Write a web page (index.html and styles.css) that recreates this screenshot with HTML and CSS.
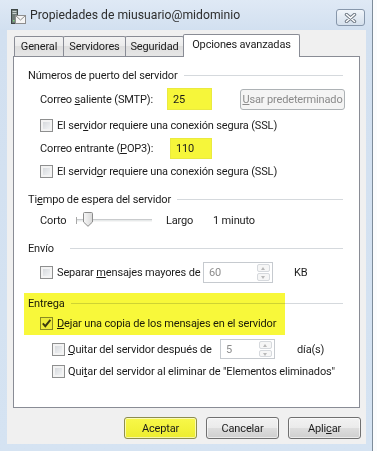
FILE: index.html
```html
<!DOCTYPE html>
<html lang="es">
<head>
<meta charset="utf-8">
<title>Propiedades de miusuario@midominio</title>
<link rel="stylesheet" href="styles.css">
</head>
<body>
<div class="window">
  <div class="titlebar">
    <svg class="app-icon" width="16" height="16" viewBox="0 0 16 16">
      <rect x="1.5" y="0.5" width="6" height="14" fill="#6f7b78" stroke="#3f4745"/>
      <rect x="2.5" y="2" width="4" height="1" fill="#c8d0cf"/>
      <rect x="2.5" y="4" width="4" height="1" fill="#c8d0cf"/>
      <rect x="3" y="11" width="1.5" height="1.5" fill="#7fd37a"/>
      <rect x="5.5" y="6.5" width="10" height="8" fill="#f5f5f5" stroke="#8d8d8d"/>
      <path d="M5.5 6.5 L10.5 11 L15.5 6.5" fill="none" stroke="#8d8d8d"/>
    </svg>
    <span class="title">Propiedades de miusuario@midominio</span>
    <div class="close">
      <svg width="13" height="10" viewBox="0 0 13 10">
        <path d="M2.5 1.5 L10.5 8.5 M10.5 1.5 L2.5 8.5" stroke="#6e7884" stroke-width="3.4" stroke-linecap="round" fill="none"/>
        <path d="M2.5 1.5 L10.5 8.5 M10.5 1.5 L2.5 8.5" stroke="#ffffff" stroke-width="1.5" stroke-linecap="round" fill="none"/>
      </svg>
    </div>
  </div>

  <div class="client">
    <div class="tabs">
      <div class="tab t-general">General</div>
      <div class="tab t-servidores">Servidores</div>
      <div class="tab t-seguridad">Seguridad</div>
      <div class="tab t-opciones active">Opciones avanzadas</div>
    </div>

    <div class="panel">
      <div class="group-head gh-puertos"><span>Números de puerto del servidor</span></div>

      <div class="row r-smtp">
        <span class="lbl lbl-smtp">Correo <u>s</u>aliente (SMTP):</span>
        <span class="field f-smtp">25</span>
        <span class="btn-disabled"><u>U</u>sar predeterminado</span>
      </div>

      <div class="row r-ssl1">
        <span class="cb"></span>
        <span class="cb-text">El ser<u>v</u>idor requiere una conexión segura (SSL)</span>
      </div>

      <div class="row r-pop3">
        <span class="lbl lbl-pop3">Correo entrante (<u>P</u>OP3):</span>
        <span class="field f-pop3">110</span>
      </div>

      <div class="row r-ssl2">
        <span class="cb"></span>
        <span class="cb-text">El servid<u>o</u>r requiere una conexión segura (SSL)</span>
      </div>

      <div class="group-head gh-tiempo"><span>Ti<u>e</u>mpo de espera del servidor</span></div>

      <div class="row r-slider">
        <span class="sl-corto">Corto</span>
        <span class="track">
          <span class="tick"></span>
          <svg class="thumb" width="10" height="15" viewBox="0 0 10 15">
            <defs>
              <linearGradient id="tg" x1="0" y1="0" x2="1" y2="0">
                <stop offset="0" stop-color="#f7f7f7"/>
                <stop offset="1" stop-color="#d9d9d9"/>
              </linearGradient>
            </defs>
            <path d="M1.5 0.5 H8.5 Q9.5 0.5 9.5 1.5 V10 L5 14.3 L0.5 10 V1.5 Q0.5 0.5 1.5 0.5 Z" fill="url(#tg)" stroke="#8c8c8c"/>
          </svg>
        </span>
        <span class="sl-largo">Largo</span>
        <span class="sl-val">1 minuto</span>
      </div>

      <div class="group-head gh-envio"><span>Envío</span></div>

      <div class="row r-split">
        <span class="cb"></span>
        <span class="cb-text split-text">Separar <u>m</u>ensajes mayores de</span>
        <span class="spin spin-kb">
          <span class="spin-val">60</span>
          <span class="updown"><span class="ud up"></span><span class="ud down"></span></span>
        </span>
        <span class="unit unit-kb">KB</span>
      </div>

      <div class="entrega">
        <div class="group-head gh-entrega"><span>Entrega</span></div>
        <div class="row r-dejar">
          <span class="cb checked">
            <svg width="11" height="11" viewBox="0 0 11 11"><path d="M1.8 5.4 L4.3 8.2 L9.4 1.8" fill="none" stroke="#3b3b3b" stroke-width="1.9"/></svg>
          </span>
          <span class="cb-text"><u>D</u>ejar una copia de los mensajes en el servidor</span>
        </div>
        <span class="marker"></span>
      </div>

      <div class="row r-quitar1">
        <span class="cb"></span>
        <span class="cb-text quitar-text"><u>Q</u>uitar del servidor después de</span>
        <span class="spin spin-dias">
          <span class="spin-val">5</span>
          <span class="updown"><span class="ud up"></span><span class="ud down"></span></span>
        </span>
        <span class="unit unit-dias">día(s)</span>
      </div>

      <div class="row r-quitar2">
        <span class="cb"></span>
        <span class="cb-text">Qui<u>t</u>ar del servidor al eliminar de "Elementos eliminados"</span>
      </div>
    </div>

    <div class="buttons">
      <span class="btn btn-ok">Aceptar</span>
      <span class="btn">Cancelar</span>
      <span class="btn">Apli<u>c</u>ar</span>
    </div>
  </div>
</div>
</body>
</html>
```

FILE: styles.css
```css
* { box-sizing: border-box; }

html, body {
  margin: 0;
  padding: 0;
}

body {
  width: 377px;
  height: 451px;
  overflow: hidden;
  background: #fbfcfd;
  font-family: Roboto, "Liberation Sans", sans-serif;
  font-size: 11px;
  letter-spacing: -0.15px;
  color: #1c1c1c;
}

u { text-decoration: underline; text-underline-offset: 1px; }

.window {
  width: 373px;
  height: 451px;
  display: flex;
  flex-direction: column;
  padding: 0 6px 7px 7px;
  border-right: 1px solid #7e8c9a;
  background: linear-gradient(180deg, #dfe9f5 0px, #d2e0f0 30px, #d5e3f2 100%);
}

/* title bar */
.titlebar {
  height: 30px;
  flex: none;
  display: flex;
  align-items: flex-start;
}

.app-icon {
  margin: 9px 0 0 3px;
  flex: none;
}

.title {
  margin: 7px 0 0 4px;
  font-size: 12.2px;
  letter-spacing: 0;
  line-height: 17px;
  color: #2e2e2e;
  flex: 1;
}

.close {
  margin: 9px 1px 0 0;
  width: 29px;
  height: 17px;
  border: 1px solid #8797ab;
  border-radius: 3px;
  background: linear-gradient(180deg, #f1f5fa 0%, #e2eaf3 50%, #d5e0ec 100%);
  display: flex;
  align-items: center;
  justify-content: center;
}

/* client */
.client {
  flex: 1;
  background: #f0f0f0;
  display: flex;
  flex-direction: column;
  padding: 4px 6px 5px 6px;
}

.tabs {
  height: 22px;
  display: flex;
  align-items: flex-end;
  padding-left: 1px;
  position: relative;
  z-index: 1;
}

.tab {
  height: 20px;
  border: 1px solid #898c95;
  border-bottom: none;
  border-radius: 2px 2px 0 0;
  background: linear-gradient(180deg, #f3f3f3 0%, #ebebeb 50%, #dedede 50%, #e6e6e6 100%);
  display: flex;
  align-items: center;
  justify-content: center;
  line-height: 14px;
  margin-right: -1px;
  padding-top: 1px;
}

.t-general { width: 50px; }
.t-servidores { width: 63px; }
.t-seguridad { width: 59px; }
.t-opciones { width: 117px; }

.tab.active {
  height: 23px;
  margin-bottom: -1px;
  background: #ffffff;
  padding-bottom: 3px;
  position: relative;
}

.panel {
  height: 352px;
  flex: none;
  background: #ffffff;
  border: 1px solid #898c95;
  padding: 0 16px 0 14px;
  display: flex;
  flex-direction: column;
}

.row {
  display: flex;
  align-items: center;
  height: 18px;
  flex: none;
}

.group-head {
  display: flex;
  align-items: center;
  height: 18px;
  flex: none;
}

.group-head::after {
  content: "";
  flex: 1;
  height: 1px;
  margin-left: 6px;
  background: #d5d9dd;
}

.gh-puertos { margin-top: 9px; }
.gh-tiempo { margin-top: 10px; }
.gh-envio { margin-top: 10px; }
.gh-envio::after { margin-left: 16px; }
.gh-entrega { margin-top: 1px; }

/* ports */
.r-smtp { margin-top: 4px; height: 22px; padding-left: 12px; }
.r-pop3 { margin-top: 3px; height: 22px; padding-left: 12px; }
.r-ssl1 { margin-top: 6px; padding-left: 12px; }
.r-ssl2 { margin-top: 3px; padding-left: 12px; }

.lbl { flex: none; }
.lbl-smtp { width: 127px; }
.lbl-pop3 { width: 130px; }

.field {
  height: 22px;
  background: #f6f63a;
  border: 1px solid #eaea40;
  display: flex;
  align-items: center;
  padding-left: 5px;
  color: #1a1a1a;
  flex: none;
}

.f-smtp { width: 45px; }
.f-pop3 { width: 42px; height: 21px; }

.btn-disabled {
  margin-left: 28px;
  width: 105px;
  height: 21px;
  border: 1px solid #adb2b5;
  border-radius: 3px;
  background: #f4f4f4;
  color: #8a8a8a;
  display: flex;
  align-items: center;
  justify-content: center;
  flex: none;
}

/* checkboxes */
.cb {
  width: 13px;
  height: 13px;
  flex: none;
  border: 1px solid #8e8f8f;
  background: linear-gradient(135deg, #cfd2d6 0%, #eceef0 70%, #f8f8f8 100%);
  box-shadow: inset 0 0 0 2px #f3f3f3;
  display: flex;
  align-items: center;
  justify-content: center;
}

.cb.checked {
  background: #f4f4f4;
  box-shadow: none;
}

.cb-text {
  margin-left: 4px;
  white-space: nowrap;
}

/* slider */
.r-slider { margin-top: 3px; padding-left: 12px; }

.sl-corto { width: 36px; flex: none; }

.track {
  position: relative;
  width: 76px;
  height: 3px;
  flex: none;
  background: #e7eaea;
  border-top: 1px solid #c9cbcd;
  border-bottom: 1px solid #f5f5f5;
}

.tick {
  position: absolute;
  left: 0;
  top: -3px;
  width: 1px;
  height: 7px;
  background: #a8a8a8;
}

.thumb {
  position: absolute;
  left: 7px;
  top: -8px;
}

.sl-largo { margin-left: 14px; width: 47px; flex: none; }
.sl-val { flex: none; }

/* envio */
.r-split { margin-top: 4px; height: 22px; padding-left: 12px; }
.split-text { width: 146px; flex: none; }

.spin {
  height: 21px;
  border: 1px solid #c6cacf;
  background: #ffffff;
  display: flex;
  align-items: center;
  flex: none;
}

.spin-kb { width: 70px; }
.spin-dias { width: 55px; height: 20px; }

.spin-val {
  flex: 1;
  padding-left: 5px;
  color: #8c8c8c;
}

.updown {
  width: 13px;
  height: calc(100% - 2px);
  margin-right: 2px;
  display: flex;
  flex-direction: column;
  gap: 1px;
}

.ud {
  flex: 1;
  border: 1px solid #d6d9dd;
  border-radius: 2px;
  background: #f6f6f6;
  position: relative;
}

.ud::after {
  content: "";
  position: absolute;
  left: 3px;
  top: 2px;
  border-left: 2.5px solid transparent;
  border-right: 2.5px solid transparent;
}

.up::after { border-bottom: 3px solid #b8b8b8; }
.down::after { border-top: 3px solid #b8b8b8; }

.unit { flex: none; }
.unit-kb { margin-left: 21px; }
.unit-dias { margin-left: 22px; }

/* entrega */
.entrega {
  position: relative;
  margin-top: 10px;
  height: 42px;
  flex: none;
}

.r-dejar { margin-top: 2px; padding-left: 12px; }

.marker {
  position: absolute;
  left: -4px;
  top: 0;
  width: 261px;
  height: 42px;
  background: #f8f83a;
  mix-blend-mode: multiply;
  pointer-events: none;
}

.r-quitar1 { margin-top: 4px; height: 20px; padding-left: 24px; }
.r-quitar1 .cb-text { margin-left: 3px; }
.quitar-text { width: 152px; flex: none; }

.r-quitar2 { margin-top: 3px; padding-left: 24px; }
.r-quitar2 .cb-text { margin-left: 3px; }

/* bottom buttons */
.buttons {
  margin-top: 9px;
  display: flex;
  justify-content: flex-end;
  gap: 9px;
  margin-right: -1px;
}

.btn {
  width: 73px;
  height: 22px;
  border: 1px solid #707070;
  border-radius: 3px;
  background: linear-gradient(180deg, #f2f2f2 0%, #ebebeb 48%, #dddddd 52%, #cfcfcf 100%);
  box-shadow: inset 0 0 0 1px rgba(255, 255, 255, 0.6);
  display: flex;
  align-items: center;
  justify-content: center;
}

.btn-ok {
  background: linear-gradient(180deg, #f8f84a 0%, #f3f33c 50%, #ecec30 100%);
  border-color: #8d8d50;
}
```
